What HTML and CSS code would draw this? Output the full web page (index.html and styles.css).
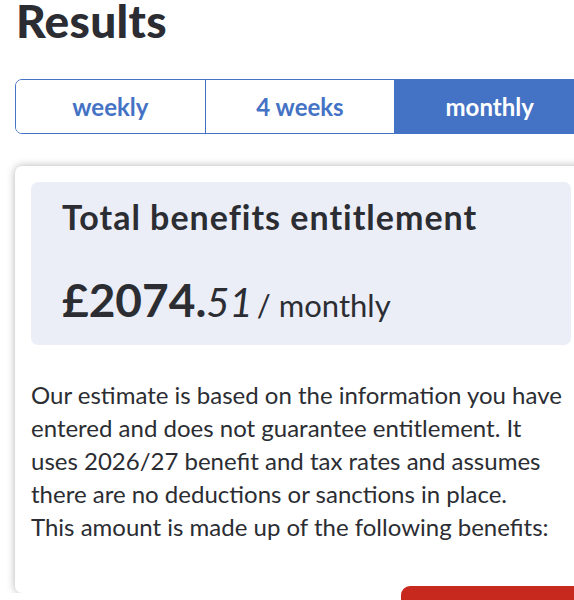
FILE: index.html
```html
<!DOCTYPE html>
<html lang="en">
<head>
    <meta charset="UTF-8">
    <meta name="viewport" content="width=device-width, initial-scale=1.0">
    <title>Results</title>
    <link rel="stylesheet" href="styles.css">
</head>
<body>
    <div class="page">
        <h1 class="title">Results</h1>

        <div class="tabs">
            <button class="tab">weekly</button>
            <button class="tab">4 weeks</button>
            <button class="tab active">monthly</button>
        </div>

        <div class="card">
            <div class="total">
                <h2>Total benefits entitlement</h2>
                <p class="amount">
                    <span class="pounds">£2074.</span><span class="pence">51</span>
                    <span class="period">/ monthly</span>
                </p>
            </div>
            <p class="note">
                Our estimate is based on the information you have
                entered and does not guarantee entitlement. It
                uses 2026/27 benefit and tax rates and assumes
                there are no deductions or sanctions in place.<br>
                This amount is made up of the following benefits:
            </p>
        </div>
    </div>

    <!-- floating action at the bottom of the screen -->
    <a href="#" class="float-btn"></a>
</body>
</html>
```

FILE: styles.css
```css
body {
  margin: 0;
  padding: 0;
  background: #fff;
  color: #2b2d33;
  font-family: 'Lato', 'Liberation Sans', sans-serif;
  overflow: hidden;
}
.page {
  width: 572px;
  padding-left: 15px;
}
.title {
  margin: 0 0 0 1px;
  padding-top: 1px;
  font-size: 46px;
  font-weight: 900;
  line-height: 40px;
  letter-spacing: 0.3px;
}

/* period switch */
.tabs {
  display: flex;
  margin-top: 38px;
  width: 570px;
  border: 1px solid #4472c4;
  border-radius: 7px;
  overflow: hidden;
  box-sizing: border-box;
}
.tab {
  flex: 1;
  height: 53px;
  border: none;
  border-left: 1px solid #4472c4;
  background: #fff;
  color: #4472c4;
  font-family: inherit;
  font-size: 24px;
  font-weight: 700;
  cursor: pointer;
}
.tab:first-child { border-left: none; }
.tab.active {
  background: #4472c4;
  color: #fff;
}

/* result card */
.card {
  margin-top: 32px;
  padding: 16px 16px 50px;
  background: #fff;
  border-radius: 7px;
  box-shadow: 0 0 8px rgba(0, 0, 0, 0.3);
}
.total {
  background: #ebeef7;
  border-radius: 7px;
  padding: 15px 31px 18px;
}
.total h2 {
  margin: 0;
  font-size: 34px;
  font-weight: 700;
  line-height: 1.2;
  letter-spacing: 1px;
}
.amount {
  margin: 34px 0 0;
  line-height: 1.2;
}
.pounds {
  font-size: 46px;
  font-weight: 700;
}
.pence {
  font-size: 40px;
  font-style: italic;
}
.period {
  font-size: 31px;
}
.note {
  margin: 33px 0 0;
  font-size: 24px;
  line-height: 33px;
}

.float-btn {
  position: fixed;
  left: 401px;
  top: 586px;
  width: 200px;
  height: 50px;
  background: #c7291f;
  border-radius: 9px;
}
```
